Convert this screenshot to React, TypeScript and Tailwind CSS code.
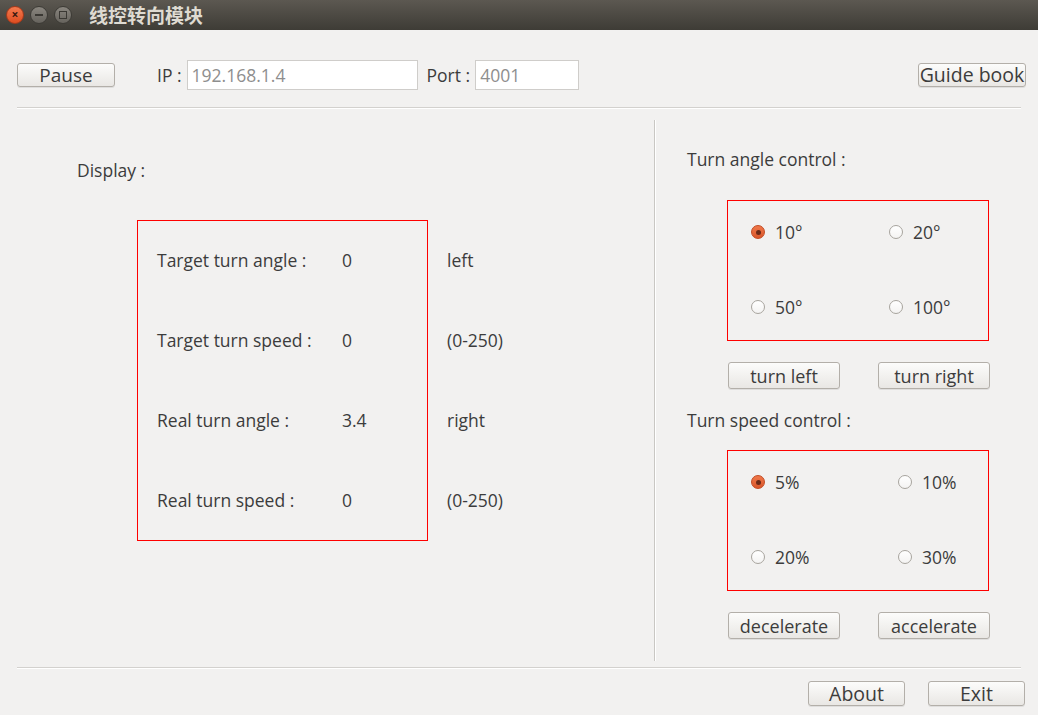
import React from 'react';

const btn =
  'flex items-center justify-center rounded-[3px] border border-[#b3afa9] bg-gradient-to-b from-[#fcfcfb] to-[#e9e7e4] shadow-[0_1px_0_rgba(0,0,0,0.08)] text-[#3c3c3c] leading-none';

function Radio({ checked, label }: { checked?: boolean; label: string }) {
  return (
    <div className="flex items-center h-[22px]">
      {checked ? (
        <div className="w-[14px] h-[14px] rounded-full bg-gradient-to-b from-[#f0784a] to-[#d9562a] border border-[#c24a22] flex items-center justify-center">
          <div className="w-[5px] h-[5px] rounded-full bg-[#6b2a18]" />
        </div>
      ) : (
        <div className="w-[14px] h-[14px] rounded-full bg-gradient-to-b from-[#ffffff] to-[#f4f3f2] border border-[#a8a49e]" />
      )}
      <span className="ml-[10px]">{label}</span>
    </div>
  );
}

function RadioBox({ items, col2 }: { items: { label: string; checked?: boolean }[]; col2: string }) {
  return (
    <div className="ml-[72px] w-[262px] h-[141px] border border-[#ff0000] pl-[23px] pt-[20px]">
      <div className="flex">
        <div className="w-[138px]"><Radio checked={items[0].checked} label={items[0].label} /></div>
        <div className={col2}><Radio label={items[1].label} /></div>
      </div>
      <div className="flex mt-[53px]">
        <div className="w-[138px]"><Radio label={items[2].label} /></div>
        <div className={col2}><Radio label={items[3].label} /></div>
      </div>
    </div>
  );
}

export default function App() {
  const rows = [
    ['Target turn angle :', '0', 'left'],
    ['Target turn speed :', '0', '(0-250)'],
    ['Real turn angle :', '3.4', 'right'],
    ['Real turn speed :', '0', '(0-250)'],
  ];

  return (
    <div
      className="w-[1038px] h-[715px] bg-[#f2f1f0] text-[#3c3c3c] text-[17.5px] overflow-hidden"
      style={{ fontFamily: '"Open Sans", "Noto Sans", sans-serif' }}
    >
      {/* title bar */}
      <div className="h-[30px] bg-gradient-to-b from-[#5c5851] to-[#3e3c36] flex items-center">
        <div className="ml-[6px] w-[18px] h-[18px] rounded-full bg-gradient-to-b from-[#f37a4e] to-[#dd4c1f] border border-[#a8391a] flex items-center justify-center text-[#3a1a10] text-[12px] leading-none font-bold">
          ×
        </div>
        <div className="ml-[6px] w-[18px] h-[18px] rounded-full bg-gradient-to-b from-[#8a867f] to-[#66635d] border border-[#3d3b36] flex items-center justify-center">
          <div className="w-[8px] h-[2px] bg-[#3a3833]" />
        </div>
        <div className="ml-[6px] w-[18px] h-[18px] rounded-full bg-gradient-to-b from-[#8a867f] to-[#66635d] border border-[#3d3b36] flex items-center justify-center">
          <div className="w-[8px] h-[8px] border-[1.5px] border-[#3a3833]" />
        </div>
        <span
          className="ml-[17px] text-[19px] font-bold text-[#dfdbd2]"
          style={{ fontFamily: '"Noto Sans CJK SC", sans-serif' }}
        >
          线控转向模块
        </span>
      </div>

      {/* toolbar */}
      <div className="flex items-center h-[30px] mt-[30px] pl-[17px] pr-[12px]">
        <button className={`${btn} w-[98px] h-[24px] text-[19px]`}>Pause</button>
        <span className="ml-[42px]">IP :</span>
        <div className="ml-[5px] w-[231px] h-[30px] bg-white border border-[#cfcdca] flex items-center pl-[4px] text-[#8e8e8e]">
          192.168.1.4
        </div>
        <span className="ml-[9px]">Port :</span>
        <div className="ml-[5px] w-[104px] h-[30px] bg-white border border-[#cfcdca] flex items-center pl-[4px] text-[#8e8e8e]">
          4001
        </div>
        <button className={`${btn} ml-auto w-[108px] h-[24px] text-[19.5px]`}>Guide book</button>
      </div>

      <div className="mx-[17px] mt-[17px] h-px bg-[#d3d1ce] shadow-[0_1px_0_#ffffff]" />

      {/* main */}
      <div className="flex h-[559px]">
        <div className="w-[637px] ml-[17px] pl-[60px]">
          <div className="mt-[51px] h-[22px] leading-[22px]">Display :</div>
          <div className="flex mt-[39px] ml-[60px]">
            <div className="w-[291px] h-[321px] border border-[#ff0000] pl-[19px] pt-[28px]">
              {rows.map((r, i) => (
                <div key={i} className={`flex h-[22px] leading-[22px] ${i ? 'mt-[58px]' : ''}`}>
                  <span className="w-[185px]">{r[0]}</span>
                  <span>{r[1]}</span>
                </div>
              ))}
            </div>
            <div className="ml-[19px] pt-[29px]">
              {rows.map((r, i) => (
                <div key={i} className={`h-[22px] leading-[22px] ${i ? 'mt-[58px]' : ''}`}>{r[2]}</div>
              ))}
            </div>
          </div>
        </div>

        <div className="w-px mt-[12px] h-[541px] bg-[#c9c7c3] shadow-[1px_0_0_#ffffff]" />

        <div className="flex-1 pl-[32px]">
          <div className="mt-[40px] h-[22px] leading-[22px]">Turn angle control :</div>
          <div className="-ml-[32px] mt-[30px]">
            <RadioBox
              items={[{ label: '10°', checked: true }, { label: '20°' }, { label: '50°' }, { label: '100°' }]}
              col2=""
            />
          </div>
          <div className="flex mt-[21px] ml-[41px] gap-[38px]">
            <button className={`${btn} w-[112px] h-[27px] text-[18px]`}>turn left</button>
            <button className={`${btn} w-[112px] h-[27px] text-[18px]`}>turn right</button>
          </div>
          <div className="mt-[20px] h-[22px] leading-[22px]">Turn speed control :</div>
          <div className="-ml-[32px] mt-[19px]">
            <RadioBox
              items={[{ label: '5%', checked: true }, { label: '10%' }, { label: '20%' }, { label: '30%' }]}
              col2="ml-[9px]"
            />
          </div>
          <div className="flex mt-[21px] ml-[41px] gap-[38px]">
            <button className={`${btn} w-[112px] h-[27px] text-[18px]`}>decelerate</button>
            <button className={`${btn} w-[112px] h-[27px] text-[18px]`}>accelerate</button>
          </div>
        </div>
      </div>

      <div className="mx-[17px] h-px bg-[#d3d1ce] shadow-[0_1px_0_#ffffff]" />

      {/* footer */}
      <div className="flex justify-end gap-[23px] pr-[13px] mt-[13px]">
        <button className={`${btn} w-[97px] h-[25px] text-[19.5px]`}>About</button>
        <button className={`${btn} w-[97px] h-[25px] text-[19.5px]`}>Exit</button>
      </div>
    </div>
  );
}
